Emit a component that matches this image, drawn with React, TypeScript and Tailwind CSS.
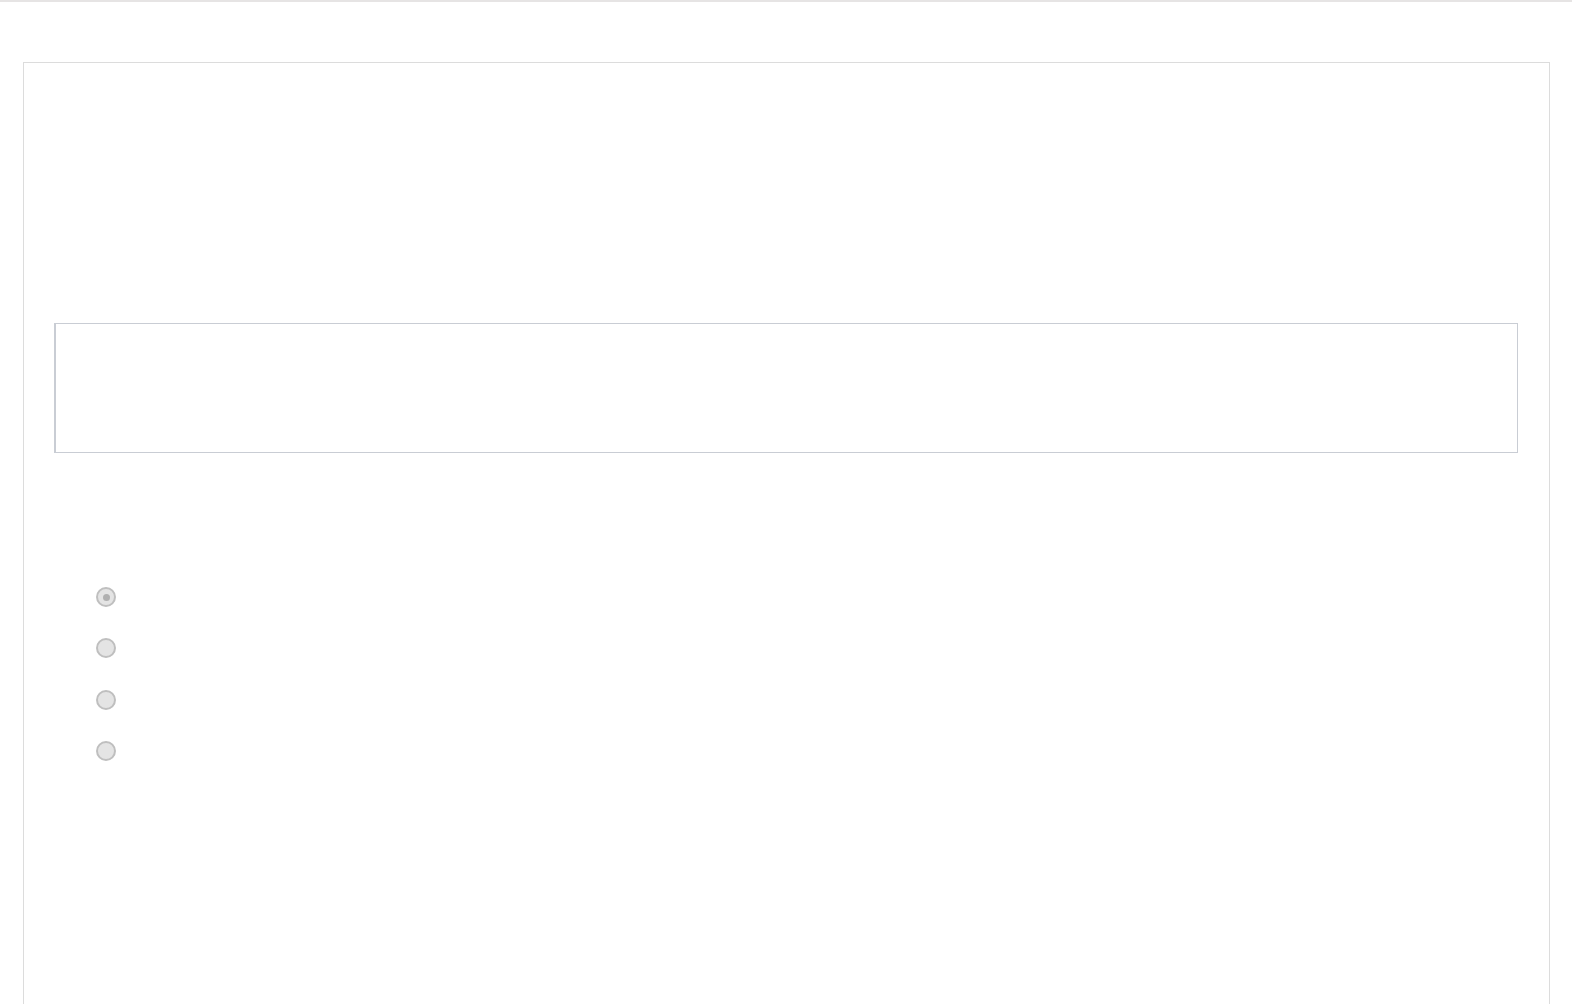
import React from 'react';

const options = [true, false, false, false];

const Radio: React.FC<{ checked: boolean }> = ({ checked }) => (
    <span className="flex h-5 w-5 items-center justify-center rounded-full border-2 border-[#bfbfbf] bg-[#e4e4e4]">
        {checked && <span className="h-[7px] w-[7px] rounded-full bg-[#b0b0b0]" />}
    </span>
);

const App: React.FC = () => {
    return (
        <div className="h-[1004px] overflow-hidden border-t-2 border-[#e6e4e4] bg-white font-['Liberation_Sans',sans-serif]">
            <div className="ml-[23px] mt-[60px] h-[1000px] w-[1527px] border border-[#dcdcdc] bg-white">
                <div className="pl-[30px] pt-[260px]">
                    <div className="h-[130px] w-[1464px] border border-l-2 border-[#c9cdd4] bg-white" />
                </div>
                <div className="ml-[72px] mt-[134px] flex flex-col gap-[31.3px]">
                    {options.map((checked, i) => (
                        <label key={i} className="flex items-center">
                            <Radio checked={checked} />
                        </label>
                    ))}
                </div>
            </div>
        </div>
    );
};

export default App;
